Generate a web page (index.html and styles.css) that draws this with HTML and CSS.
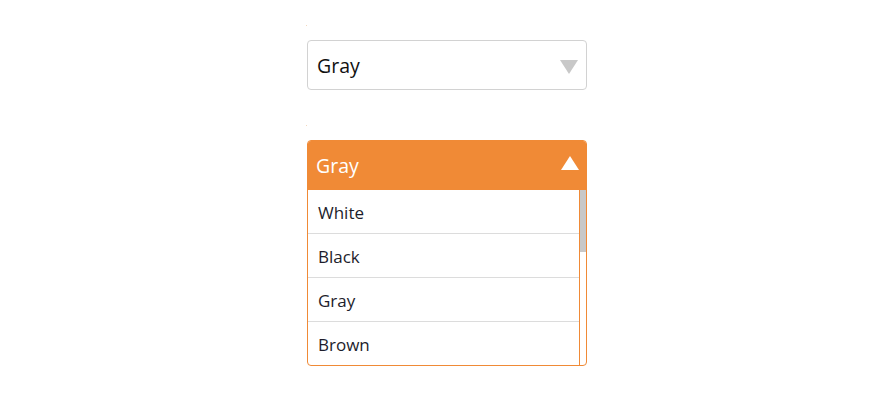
FILE: index.html
```html
<!DOCTYPE html>
<html>
<head>
<meta charset="utf-8">
<link rel="stylesheet" href="styles.css">
</head>
<body>
<div class="page">
  <div class="field">
    <span class="label"></span>
    <div class="select">
      <span class="value">Gray</span>
      <svg class="caret" width="18" height="14" viewBox="0 0 18 14"><polygon points="0,0 18,0 9,14" fill="#c8c8c8"/></svg>
    </div>
  </div>
  <div class="field">
    <span class="label"></span>
    <div class="select-open">
      <div class="head">
        <span class="value">Gray</span>
        <svg class="caret-up" width="18" height="14" viewBox="0 0 18 14"><polygon points="0,14 18,14 9,0" fill="#ffffff"/></svg>
      </div>
      <div class="list">
        <ul class="options">
          <li>White</li>
          <li>Black</li>
          <li>Gray</li>
          <li>Brown</li>
        </ul>
        <div class="track"><div class="thumb"></div></div>
      </div>
    </div>
  </div>
</div>
</body>
</html>
```
FILE: styles.css
```css
* { box-sizing: border-box; }
html, body { margin: 0; padding: 0; background: #fff; }
body { font-family: "Open Sans", "Noto Sans", sans-serif; }
.page {
  width: 280px;
  margin: 0 auto;
  padding-top: 25px;
  display: flex;
  flex-direction: column;
  gap: 35px;
}
.field { display: flex; flex-direction: column; }
.label {
  display: block;
  width: 1px;
  height: 1px;
  margin-left: -1px;
  margin-bottom: 14px;
  background: #f3d7bd;
}
.select {
  height: 50px;
  border: 1px solid #d2d2d2;
  border-radius: 4px;
  display: flex;
  align-items: center;
  justify-content: space-between;
  padding: 0 8px 0 9px;
}
.select .value {
  font-size: 19.5px;
  color: #111;
  line-height: 1;
  padding-top: 2px;
}
.caret { display: block; margin-top: 3px; }
.select-open {
  border: 1px solid #f08a36;
  border-radius: 4px;
  overflow: hidden;
}
.head {
  background: #f08a36;
  display: flex;
  align-items: center;
  justify-content: space-between;
  padding: 0 8px 0 9px;
  margin: -1px -1px 0 -1px;
  height: 50px;
  border-radius: 4px 4px 0 0;
}
.head .value {
  font-size: 19.5px;
  color: #fff;
  line-height: 1;
  padding-top: 1px;
}
.caret-up { display: block; margin-top: -4px; }
.list { display: flex; }
.options {
  list-style: none;
  margin: 0;
  padding: 0;
  flex: 1;
}
.options li {
  height: 44px;
  border-bottom: 1px solid #dcdcdc;
  display: flex;
  align-items: center;
  padding-left: 10px;
  font-size: 17px;
  color: #1d1d2b;
  padding-top: 1px;
}
.options li:last-child { border-bottom: none; height: 43px; }
.track {
  width: 7px;
  border-left: 1px solid #f08a36;
}
.thumb {
  width: 6px;
  height: 62px;
  background: #c8c8c8;
}
```
